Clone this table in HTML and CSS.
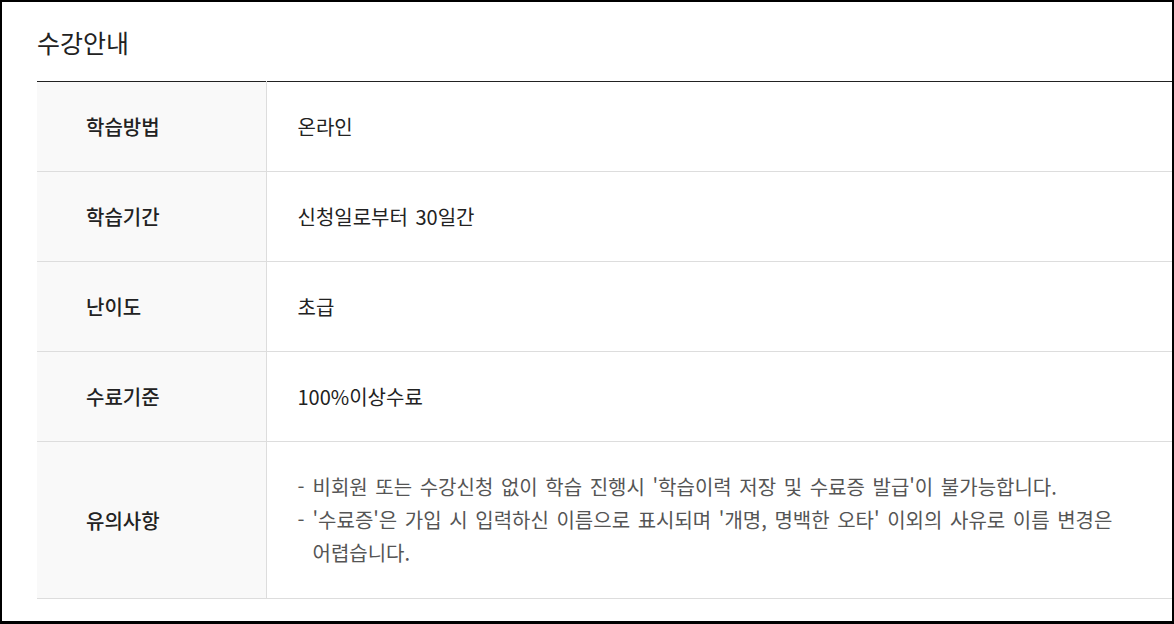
FILE: index.html
```html
<!DOCTYPE html>
<html lang="ko">
<head>
<meta charset="utf-8">
<title>수강안내</title>
<link rel="stylesheet" href="styles.css">
</head>
<body>
<div class="frame">
  <h2 class="title">수강안내</h2>
  <table class="info">
    <tbody>
      <tr>
        <th>학습방법</th>
        <td>온라인</td>
      </tr>
      <tr>
        <th>학습기간</th>
        <td>신청일로부터 30일간</td>
      </tr>
      <tr>
        <th>난이도</th>
        <td>초급</td>
      </tr>
      <tr>
        <th>수료기준</th>
        <td>100%이상수료</td>
      </tr>
      <tr>
        <th>유의사항</th>
        <td class="notes-cell">
          <ul class="notes">
            <li>비회원 또는 수강신청 없이 학습 진행시 '학습이력 저장 및 수료증 발급'이 불가능합니다.</li>
            <li>'수료증'은 가입 시 입력하신 이름으로 표시되며 '개명, 명백한 오타' 이외의 사유로 이름 변경은 어렵습니다.</li>
          </ul>
        </td>
      </tr>
    </tbody>
  </table>
</div>
</body>
</html>
```
FILE: styles.css
```css
* { box-sizing: border-box; }
html, body { margin: 0; padding: 0; background: #fff; }
body {
  font-family: "Noto Sans CJK KR", "Noto Sans", sans-serif;
  color: #222;
}
.frame {
  width: 1174px;
  height: 624px;
  border: 2px solid #000;
  border-bottom-width: 3px;
  padding: 22px 0 0 35px;
  overflow: hidden;
}
.title {
  margin: 0 0 21px;
  font-size: 25px;
  line-height: 36px;
  font-weight: 400;
  color: #222;
}
.info {
  width: 100%;
  border-collapse: collapse;
  border-top: 1px solid #222;
}
.info th,
.info td {
  border-bottom: 1px solid #ddd;
  padding: 28px 0;
  font-size: 20px;
  line-height: 33px;
  text-align: left;
  vertical-align: middle;
}
.info th {
  width: 229px;
  padding-left: 49px;
  background: #f9f9f9;
  border-right: 1px solid #ddd;
  font-weight: 500;
  color: #222;
}
.info td {
  padding-left: 31px;
  padding-right: 50px;
  font-weight: 400;
  color: #222;
  word-spacing: 2px;
  word-break: keep-all;
}
.info td.notes-cell {
  padding-top: 28px;
  padding-bottom: 29px;
}
.notes {
  list-style: none;
  margin: 0;
  padding: 0;
  color: #555;
}
.notes li {
  position: relative;
  padding-left: 15px;
}
.notes li::before {
  content: "-";
  position: absolute;
  left: 0;
  top: 0;
}
```
